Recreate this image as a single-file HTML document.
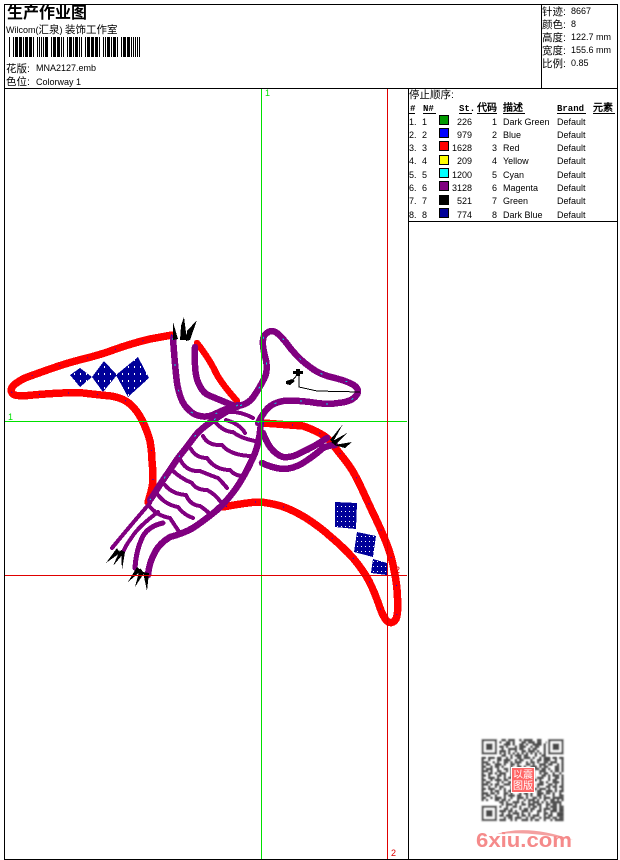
<!DOCTYPE html>
<html><head><meta charset="utf-8"><style>
html,body{margin:0;padding:0;background:#fff;width:620px;height:860px;overflow:hidden}
svg{display:block}
text{font-family:"Liberation Sans","WenQuanYi Zen Hei","Noto Sans CJK SC",sans-serif;font-size:9px;fill:#000}
tspan.c{font-size:10.5px}
.b{font-family:"Liberation Mono","WenQuanYi Zen Hei",monospace;font-weight:bold;font-size:9px}
.b.z{font-size:10px}
.r{stroke:#f00;stroke-width:7.5;fill:none;stroke-linejoin:round;stroke-linecap:round}
.p{stroke:#800080;stroke-width:6.5;fill:none;stroke-linejoin:round;stroke-linecap:round}
.s{stroke:#800080;stroke-width:4;fill:none;stroke-linejoin:round;stroke-linecap:round}
.k1{stroke:#0000ff;stroke-width:1;fill:none;stroke-dasharray:1 28}
.k2{stroke:#00e0e0;stroke-width:1;fill:none;stroke-dasharray:2 24}
</style></head><body>
<svg width="620" height="860" viewBox="0 0 620 860" xmlns="http://www.w3.org/2000/svg">
<defs>
<pattern id="d" width="6" height="7" patternUnits="userSpaceOnUse"><rect width="6" height="7" fill="#000099"/><rect x="2" y="2" width="1" height="2" fill="#fff"/></pattern>
<pattern id="e" width="4" height="5" patternUnits="userSpaceOnUse"><rect width="4" height="5" fill="#000099"/><rect x="1" y="1" width="1" height="1" fill="#fff"/></pattern>
<filter id="bl" x="-5%" y="-5%" width="110%" height="110%"><feGaussianBlur stdDeviation=".35"/></filter>
<path id="r1" d="M172 335 L150 339 Q133 343 116 349 Q100 355 83 359 Q67 363 50 369 Q33 375 25 378 Q17 382 14 385 Q9 390 13 394 Q16 397 33 395 Q67 392 83 393 Q100 395 111 396 Q123 398 130 404 Q137 410 142 420 Q147 430 150 441 Q152 453 152 461 Q153 470 153 478 Q153 487 148 502"/>
<path id="r2" d="M263 423 L303 426 Q323 433 330 441 Q337 450 345 460 Q353 470 360 485 Q367 500 373 513 Q380 527 386 542 Q392 557 394 570 Q397 583 397.500 598 Q398.500 613 396 619 Q392 625 387 621 Q383 617 379 605 Q375 593 369 581 Q363 570 353 558 Q343 547 331 537 Q320 527 306 518 Q293 510 281 506 Q270 503 260 502 Q250 502 223 507"/>
<path id="p1" d="M173 338 Q175 367 177 383 Q180 400 186 407 Q193 415 200 416 Q208 418 217 413 Q227 408 237 406 Q248 405 254 396 Q260 387 264 379 Q268 372 266 360 Q261 343 264 336 Q270 328 277 333 Q283 338 291 349 Q300 360 310 367 Q320 375 335 378 Q350 382 355 386 Q361 391 355 397 Q350 402 338 403 Q327 405 310 402 Q293 400 283 401 Q273 403 268 408 Q263 413 258 423"/>
<path id="p2" d="M238 405 Q203 425 195 436 Q187 447 178 458 Q170 470 161 483 Q155 493 150 500"/>
</defs>
<rect width="620" height="860" fill="#fff"/>

<!-- drawing -->
<g shape-rendering="crispEdges">
<use href="#r1" class="r"/>
<path class="r" style="stroke-width:6.500" d="M197 343 Q210 360 215 371 Q220 382 237 401"/>
<use href="#r2" class="r"/>

<use href="#p1" class="p"/>
<path class="p" d="M195 347 Q194 373 198 382 Q202 392 208 395 Q215 398 237 407"/>
<use href="#p2" class="p"/>
<path class="p" d="M261 420 Q260 440 255 453 Q247 472 237 487 Q228 500 217 510 Q205 520 193 528 Q182 534 170 537 Q160 543 155 552 Q149 563 148 575"/>
<path class="s" d="M150 503 Q130 526 112 548"/>
<path class="s" d="M158 512 Q138 527 132 537 Q126 545 123 552"/>
<path class="s" style="stroke-width:5" d="M163 523 Q149 526 143 536 Q136 550 135 568"/>
<path class="p" d="M263 433 Q266 441 270 447 Q276 455 283 457 Q292 458 300 453 Q314 447 327 438"/>
<path class="p" d="M262 463 Q272 468 283 469 Q293 469 303 463 Q314 456 323 448 Q330 445 335 445"/>

<path class="s" d="M215 422 Q224 432 233 432 Q240 438 255 441"/>
<path class="s" d="M203 436 Q208 446 222 445 Q230 455 250 456"/>
<path class="s" d="M191 449 Q196 458 207 458 Q215 470 230 470 Q235 476 243 476"/>
<path class="s" d="M180 459 Q186 472 200 471 Q212 476 218 478 Q224 484 227 488"/>
<path class="s" d="M172 470 Q180 478 192 483 Q196 490 207 490 Q215 494 220 501"/>
<path class="s" d="M165 485 Q172 494 186 495 Q190 505 200 506 Q206 510 210 514"/>
<path class="s" d="M158 495 Q166 505 178 507 Q184 515 193 518"/>
<path class="s" d="M150 507 Q158 516 170 518 Q175 526 180 533"/>
<path class="s" d="M228 412 Q240 411 253 418"/>
<path class="s" d="M226 420 Q240 424 245 433"/>

<use href="#r1" class="k1"/><use href="#r2" class="k1"/><use href="#p1" class="k2"/><use href="#p2" class="k2"/>

<g fill="#000">
<path d="M173 322 L178 339 L173 340Z M184 317 L187 340 L180 340 L181 326Z M197 320 L190 340 L186 341 L187 331Z"/>
<path d="M343 424 L330 440 L333 442Z M347 433 L331 442 L335 445Z M352 442 L334 445 L345 448Z"/>
<path d="M117 548 L106 563 L120 553Z M120 550 L113 566 L123 554Z M121 550 L122 570 L125 552Z"/>
<path d="M137 567 L128 582 L141 571Z M140 568 L135 587 L144 573Z M143 572 L147 591 L149 573Z"/>
<path d="M293 371 H303 V374 H293Z M296 369 H300 V376 H296Z M286 381 L292 379 L295 381 L290 385 L286 384Z"/>
</g>
<path d="M299 375 V387 L317 391 L360 392 M297 375 L292 381" stroke="#000" fill="none"/>

<path fill="url(#d)" d="M70 375 L80 368 L92 377 L80 387Z M92 377 L104 361 L117 375 L103 392Z M116 375 L138 357 L149 378 L128 397Z"/>
<path fill="url(#e)" d="M335 502 L357 503 L356 529 L335 527Z M357 532 L376 536 L373 557 L354 552Z M373 559 L387 563 L387 575 L371 573Z"/>

<path d="M261.500 88V859M4 421.500H407" stroke="#00e000" fill="none"/>
<path d="M387.500 88V859M4 575.500H407" stroke="#e00000" fill="none"/>

<!-- frame -->
<path d="M4.500 4.500H617.500V859.500H4.500Z M4.500 88.500H617.500 M541.500 4.500V88.500 M408.500 88.500V859.500 M408.500 221.500H617.500" stroke="#000" fill="none"/>

<!-- barcode -->
<path d="M9 47H140" stroke="#000" stroke-width="20" stroke-dasharray="1 3 1 1 3 1 3 1 1 1 3 1 3 1 1 3 1 1 1 1 1 1 1 1 3 3 1 1 3 1 3 1 1 1 1 3 1 1 3 1 1 1 3 1 1 1 1 3 1 1 3 1 3 1 3 1 1 3 1 1 1 1 3 1 1 1 3 1 1 3 1 1 3 1 3 1 1 1 1 1 1 1 1 1 1 1 1 1 1"/>

<g fill="#000">
<rect x="439" y="115" width="10" height="10"/><rect x="439" y="128" width="10" height="10"/><rect x="439" y="141" width="10" height="10"/><rect x="439" y="155" width="10" height="10"/><rect x="439" y="168" width="10" height="10"/><rect x="439" y="181" width="10" height="10"/><rect x="439" y="195" width="10" height="10"/><rect x="439" y="208" width="10" height="10"/>
</g>
<rect x="440" y="116" width="8" height="8" fill="#009900"/><rect x="440" y="129" width="8" height="8" fill="#00f"/><rect x="440" y="142" width="8" height="8" fill="#f00"/><rect x="440" y="156" width="8" height="8" fill="#ff0"/><rect x="440" y="169" width="8" height="8" fill="#0ff"/><rect x="440" y="182" width="8" height="8" fill="#800080"/><rect x="440" y="209" width="8" height="8" fill="#000099"/>
<path d="M409 113.500H415 M423 113.500H436 M459 113.500H472 M477 113.500H497 M503 113.500H525 M557 113.500H586 M593 113.500H615" stroke="#000" fill="none"/>
</g>

<!-- green / red labels -->
<text x="265" y="96" style="fill:#00e000">1</text>
<text x="8" y="420" style="fill:#00e000">1</text>
<text x="391" y="856" style="fill:#e00000">2</text>
<text x="395" y="573" style="fill:#e00000">2</text>

<!-- left header -->
<text x="7" y="18" style="font-size:16px;font-weight:bold">生产作业图</text>
<text x="6" y="33">Wilcom(<tspan class="c">汇泉</tspan>) <tspan class="c">装饰工作室</tspan></text>
<text x="6" y="72"><tspan class="c">花版:</tspan></text><text x="36" y="71">MNA2127.emb</text>
<text x="6" y="85"><tspan class="c">色位:</tspan></text><text x="36" y="85">Colorway 1</text>

<!-- right stats -->
<text x="542" y="15"><tspan class="c">针迹:</tspan></text><text x="571" y="14">8667</text>
<text x="542" y="28"><tspan class="c">颜色:</tspan></text><text x="571" y="27">8</text>
<text x="542" y="41"><tspan class="c">高度:</tspan></text><text x="571" y="40">122.7 mm</text>
<text x="542" y="54"><tspan class="c">宽度:</tspan></text><text x="571" y="53">155.6 mm</text>
<text x="542" y="67"><tspan class="c">比例:</tspan></text><text x="571" y="66">0.85</text>

<!-- table -->
<text x="409" y="98"><tspan class="c">停止顺序:</tspan></text>
<text class="b" x="410" y="111">#</text><text class="b" x="423" y="111">N#</text><text class="b" x="459" y="111">St.</text><text class="b z" x="477" y="111">代码</text><text class="b z" x="503" y="111">描述</text><text class="b" x="557" y="111">Brand</text><text class="b z" x="593" y="111">元素</text>

<text x="409" y="125">1.</text><text x="422" y="125">1</text><text x="472" y="125" text-anchor="end">226</text><text x="497" y="125" text-anchor="end">1</text><text x="503" y="125">Dark Green</text><text x="557" y="125">Default</text>
<text x="409" y="138">2.</text><text x="422" y="138">2</text><text x="472" y="138" text-anchor="end">979</text><text x="497" y="138" text-anchor="end">2</text><text x="503" y="138">Blue</text><text x="557" y="138">Default</text>
<text x="409" y="151">3.</text><text x="422" y="151">3</text><text x="472" y="151" text-anchor="end">1628</text><text x="497" y="151" text-anchor="end">3</text><text x="503" y="151">Red</text><text x="557" y="151">Default</text>
<text x="409" y="164">4.</text><text x="422" y="164">4</text><text x="472" y="164" text-anchor="end">209</text><text x="497" y="164" text-anchor="end">4</text><text x="503" y="164">Yellow</text><text x="557" y="164">Default</text>
<text x="409" y="178">5.</text><text x="422" y="178">5</text><text x="472" y="178" text-anchor="end">1200</text><text x="497" y="178" text-anchor="end">5</text><text x="503" y="178">Cyan</text><text x="557" y="178">Default</text>
<text x="409" y="191">6.</text><text x="422" y="191">6</text><text x="472" y="191" text-anchor="end">3128</text><text x="497" y="191" text-anchor="end">6</text><text x="503" y="191">Magenta</text><text x="557" y="191">Default</text>
<text x="409" y="204">7.</text><text x="422" y="204">7</text><text x="472" y="204" text-anchor="end">521</text><text x="497" y="204" text-anchor="end">7</text><text x="503" y="204">Green</text><text x="557" y="204">Default</text>
<text x="409" y="218">8.</text><text x="422" y="218">8</text><text x="472" y="218" text-anchor="end">774</text><text x="497" y="218" text-anchor="end">8</text><text x="503" y="218">Dark Blue</text><text x="557" y="218">Default</text>

<!-- QR -->
<g transform="translate(481.500 739) scale(2.22)" fill="none" stroke="#4a4a4a" stroke-width="1" filter="url(#bl)">
<path d="M0 .5h37" stroke-dasharray="0 9 2 1 3 2 1 1 4 2 2 3 1 6"/>
<path d="M0 1.500h37" stroke-dasharray="0 8 1 2 2 1 1 3 2 1 3 1 2 2 1 7"/>
<path d="M0 2.500h37" stroke-dasharray="0 10 3 1 1 2 2 1 1 2 4 1 1 8"/>
<path d="M0 3.500h37" stroke-dasharray="0 8 2 1 1 3 1 1 3 2 1 1 2 2 1 8"/>
<path d="M0 4.500h37" stroke-dasharray="0 9 1 2 4 1 2 2 1 1 2 3 1 8"/>
<path d="M0 5.500h37" stroke-dasharray="0 8 3 1 1 2 1 2 2 1 3 1 1 2 1 8"/>
<path d="M0 6.500h37" stroke-dasharray="0 8 1 1 1 1 1 1 1 1 1 1 1 1 1 1 1 1 1 1 1 1 1 9"/>
<path d="M0 7.500h37" stroke-dasharray="0 9 2 2 1 1 3 1 2 3 1 2 2 8"/>
<path d="M0 8.500h37" stroke-dasharray="2 1 3 1 2 2 1 1 1 2 2 1 3 1 1 2 1 1 3 1 2 1 2"/>
<path d="M0 9.500h37" stroke-dasharray="1 2 1 3 2 1 3 2 1 1 2 3 1 2 2 1 3 2 1 2 2"/>
<path d="M0 10.500h37" stroke-dasharray="3 2 1 1 1 2 2 1 1 1 3 2 1 1 2 1 1 2 2 1 3 2 1"/>
<path d="M0 11.500h37" stroke-dasharray="1 1 2 2 3 1 1 2 2 1 1 3 2 1 1 2 3 1 2 2 1 1 1"/>
<path d="M0 12.500h37" stroke-dasharray="2 2 1 1 2 1 1 3 1 2 2 1 1 2 3 1 1 1 2 3 2 1 1"/>
<path d="M0 13.500h37" stroke-dasharray="1 1 3 2 1 2 2 1 3 1 1 2 1 3 2 1 2 1 1 2 2 1 1"/>
<path d="M0 14.500h37" stroke-dasharray="3 1 1 2 2 2 1 1 1 3 1 1 2 2 1 2 3 2 1 1 2 1 2"/>
<path d="M0 15.500h37" stroke-dasharray="1 2 2 1 1 1 3 2 1 1 2 2 1 1 3 2 1 1 2 2 1 2 1"/>
<path d="M0 16.500h37" stroke-dasharray="2 1 1 3 2 1 1 2 3 1 1 2 2 1 1 3 2 1 1 1 3 1 1"/>
<path d="M0 17.500h37" stroke-dasharray="1 2 3 1 1 2 1 1 2 3 1 1 2 2 1 1 3 2 1 2 2 1 1"/>
<path d="M0 18.500h37" stroke-dasharray="2 2 1 1 3 1 2 2 1 1 3 1 1 2 2 1 1 3 1 1 2 2 1"/>
<path d="M0 19.500h37" stroke-dasharray="1 1 2 3 1 1 1 2 2 1 1 3 1 1 2 3 2 1 1 2 3 1 1"/>
<path d="M0 20.500h37" stroke-dasharray="3 1 1 1 2 2 3 1 1 2 1 1 2 2 1 1 3 2 2 1 1 2 1"/>
<path d="M0 21.500h37" stroke-dasharray="1 2 1 2 1 1 2 3 1 1 2 1 3 1 1 2 1 3 2 1 2 1 2"/>
<path d="M0 22.500h37" stroke-dasharray="2 1 3 2 1 1 1 2 3 1 2 2 1 1 2 1 3 1 1 2 1 2 1"/>
<path d="M0 23.500h37" stroke-dasharray="1 3 1 1 2 2 1 1 2 2 1 3 1 2 1 1 2 2 3 1 1 1 2"/>
<path d="M0 24.500h37" stroke-dasharray="3 1 2 1 1 2 2 1 1 3 1 1 2 1 1 2 3 1 2 1 1 2 1"/>
<path d="M0 25.500h37" stroke-dasharray="1 1 2 2 1 3 1 1 3 1 2 2 1 1 1 2 2 1 1 3 1 2 2"/>
<path d="M0 26.500h37" stroke-dasharray="2 2 1 1 3 1 1 2 1 2 3 1 1 2 2 1 1 1 3 1 5 1 1"/>
<path d="M0 27.500h37" stroke-dasharray="1 1 1 3 2 1 2 1 1 3 1 2 1 1 3 1 1 2 1 2 2 1 1 1 1"/>
<path d="M0 28.500h37" stroke-dasharray="0 8 2 1 1 2 3 1 1 2 1 1 3 1 1 1 1 1 5 1 1"/>
<path d="M0 29.500h37" stroke-dasharray="0 9 1 1 3 1 1 2 2 1 3 1 2 2 2 1 2 1 1 1"/>
<path d="M0 30.500h37" stroke-dasharray="0 8 1 2 1 2 2 1 1 3 1 1 2 1 1 2 1 1 3 1 2"/>
<path d="M0 31.500h37" stroke-dasharray="0 10 2 1 1 3 1 1 2 1 2 2 1 1 3 1 2 1 1"/>
<path d="M0 32.500h37" stroke-dasharray="0 8 3 1 2 1 1 2 3 1 1 2 2 1 1 2 3 1 1"/>
<path d="M0 33.500h37" stroke-dasharray="0 9 1 2 1 1 3 1 1 2 1 3 1 2 2 1 1 2 3"/>
<path d="M0 34.500h37" stroke-dasharray="0 8 2 1 3 2 1 1 2 1 1 1 3 2 1 1 2 2 1"/>
<path d="M0 35.500h37" stroke-dasharray="0 10 1 1 2 1 3 2 1 1 2 2 1 1 3 1 2 1 2"/>
<path d="M0 36.500h37" stroke-dasharray="0 8 3 2 1 1 1 2 3 1 1 1 2 2 1 2 1 1 3"/>
<rect x="-.5" y="-.5" width="8" height="8" fill="#fff" stroke="none"/><rect x="29.500" y="-.5" width="8" height="8" fill="#fff" stroke="none"/><rect x="-.5" y="29.500" width="8" height="8" fill="#fff" stroke="none"/>
<rect x=".5" y=".5" width="6" height="6"/><rect x="30.500" y=".5" width="6" height="6"/><rect x=".5" y="30.500" width="6" height="6"/>
<rect x="2" y="2" width="3" height="3" fill="#4a4a4a" stroke="none"/><rect x="32" y="2" width="3" height="3" fill="#4a4a4a" stroke="none"/><rect x="2" y="32" width="3" height="3" fill="#4a4a4a" stroke="none"/>
</g>
<rect x="511" y="767" width="24" height="26" fill="#fff"/>
<rect x="512" y="768" width="22" height="24" fill="#f66"/>
<text x="513" y="778" style="font-size:10px;fill:#fff">以</text><text x="523" y="778" style="font-size:10px;fill:#fff">震</text>
<text x="513" y="789" style="font-size:10px;fill:#fff">图</text><text x="523" y="789" style="font-size:10px;fill:#fff">版</text>

<!-- watermark -->
<path d="M497 834 Q528 824 573 840 Q530 831 497 834Z" fill="#f4a0a0"/>
<text x="476" y="847" textLength="96" lengthAdjust="spacingAndGlyphs" style="font-size:20px;font-weight:bold;fill:#f58a8a;font-family:'Liberation Sans',sans-serif">6xiu.com</text>
</svg>
</body></html>
